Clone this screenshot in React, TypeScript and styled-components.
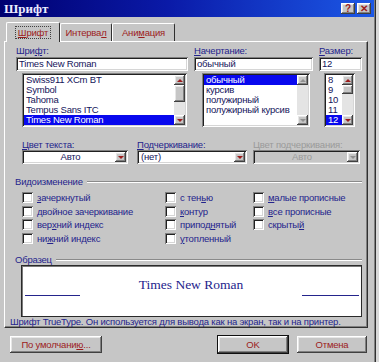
import * as React from 'react';
import styled, { createGlobalStyle, css } from 'styled-components';

const ui = '"Liberation Sans", Arial, sans-serif';
const face = '#c6c6c6';
const navy = '#24248c';
const ink = '#14145a';
const maroon = '#9c1c1c';

const raised = css`
  box-shadow: inset -1px -1px #404040, inset 1px 1px #ffffff, inset -2px -2px #808080,
    inset 2px 2px #e6e6e6;
`;

const sunken = css`
  box-shadow: inset 1px 1px #808080, inset -1px -1px #ffffff, inset 2px 2px #202020,
    inset -2px -2px #d6d6d6;
`;

const GlobalStyle = createGlobalStyle`
  body {
    margin: 0;
    background: #d8d8d8;
    font-family: ${ui};
  }
`;

const Window = styled.div`
  width: 376px;
  height: 362px;
  background: ${face};
  box-shadow: inset -1px 0 #303030, inset -2px 0 #808080;
  display: flex;
  flex-direction: column;
  font-family: ${ui};
  font-size: 9.5px;
  letter-spacing: -0.2px;
`;

const TitleBar = styled.div`
  height: 17px;
  margin-right: 2px;
  display: flex;
  align-items: center;
  padding: 0 3px 0 4px;
  background: linear-gradient(to right, #000070 0%, #0a1aa8 45%, #1c58e6 100%);
`;

const TitleText = styled.span`
  font: bold 13px 'Liberation Serif', serif;
  letter-spacing: 0;
  color: #ecebff;
`;

const TitleButtons = styled.div`
  margin-left: auto;
  display: flex;
  gap: 2px;
`;

const TitleButton = styled.div`
  width: 14px;
  height: 11px;
  background: ${face};
  ${raised};
  color: ${maroon};
  font: bold 10px 'Liberation Sans', sans-serif;
  display: flex;
  align-items: center;
  justify-content: center;
  line-height: 1;
`;

const TabStrip = styled.div`
  height: 24px;
  display: flex;
  align-items: flex-end;
  padding-left: 6px;
`;

const Tab = styled.div<{ $active?: boolean; $w: number }>`
  position: relative;
  z-index: ${({ $active }) => ($active ? 1 : 0)};
  width: ${({ $w }) => $w}px;
  height: ${({ $active }) => ($active ? 20 : 18)}px;
  margin-bottom: ${({ $active }) => ($active ? -1 : 0)}px;
  box-sizing: border-box;
  border: 1px solid;
  border-color: #ffffff #303030 transparent #ffffff;
  border-bottom: none;
  border-radius: 2px 2px 0 0;
  background: ${face};
  color: ${maroon};
  display: flex;
  align-items: center;
  justify-content: center;
`;

const FocusRect = styled.span`
  outline: 1px dotted #404040;
  padding: 0 2px;
  line-height: 11px;
`;

const Key = styled.span`
  text-decoration: underline;
`;

const Panel = styled.div`
  margin: 0 8px 0 4px;
  box-sizing: border-box;
  border: 1px solid;
  border-color: #ffffff #303030 #303030 #ffffff;
  box-shadow: inset -1px -1px #808080;
  padding: 3px 5px 0 11px;
  display: flex;
  flex-direction: column;
`;

const TopRow = styled.div`
  display: flex;
  gap: 6px;
`;

const Column = styled.div<{ $w: number }>`
  width: ${({ $w }) => $w}px;
  display: flex;
  flex-direction: column;
`;

const Label = styled.div<{ $disabled?: boolean; $h?: number }>`
  height: ${({ $h }) => $h ?? 12}px;
  line-height: ${({ $h }) => $h ?? 12}px;
  color: ${({ $disabled }) => ($disabled ? '#9a9a9a' : navy)};
  white-space: nowrap;
`;

const TextBox = styled.div`
  height: 14px;
  line-height: 14px;
  padding-left: 3px;
  background: #ffffff;
  ${sunken};
  color: ${ink};
`;

const ListBox = styled.div<{ $left: number; $w: number }>`
  margin: 2px 0 0 ${({ $left }) => $left}px;
  width: ${({ $w }) => $w}px;
  height: 54px;
  box-sizing: border-box;
  padding: 2px;
  background: #ffffff;
  ${sunken};
  display: flex;
`;

const Items = styled.div`
  flex: 1;
  display: flex;
  flex-direction: column;
  overflow: hidden;
`;

const Item = styled.div<{ $selected?: boolean }>`
  height: 10px;
  line-height: 10px;
  padding-left: 2px;
  white-space: nowrap;
  color: ${({ $selected }) => ($selected ? '#ffffff' : ink)};
  background: ${({ $selected }) => ($selected ? '#0808ee' : 'transparent')};
`;

const ScrollBar = styled.div`
  width: 11px;
  display: flex;
  flex-direction: column;
  background: #e4e4e4;
`;

const ScrollTrack = styled.div`
  flex: 1;
  display: flex;
  flex-direction: column;
`;

const ArrowBox = styled.div`
  height: 10px;
  background: ${face};
  ${raised};
  display: flex;
  align-items: center;
  justify-content: center;
`;

const Triangle = styled.span<{ $down?: boolean; $disabled?: boolean }>`
  width: 0;
  height: 0;
  border-left: 3px solid transparent;
  border-right: 3px solid transparent;
  ${({ $down, $disabled }) =>
    $down
      ? `border-top: 3px solid ${$disabled ? '#909090' : maroon};`
      : `border-bottom: 3px solid ${$disabled ? '#909090' : maroon};`}
`;

const Thumb = styled.div<{ $top: number; $h: number }>`
  margin-top: ${({ $top }) => $top}px;
  height: ${({ $h }) => $h}px;
  background: ${face};
  ${raised};
`;

const ComboRow = styled.div`
  display: flex;
  margin: 13px 0 0 6px;
  gap: 9px;
`;

const ComboField = styled.div<{ $w: number; $gap?: number }>`
  width: ${({ $w }) => $w}px;
  margin-left: ${({ $gap }) => $gap ?? 0}px;
  display: flex;
  flex-direction: column;
`;

const Combo = styled.div<{ $disabled?: boolean }>`
  height: 14px;
  box-sizing: border-box;
  padding: 2px;
  display: flex;
  background: ${({ $disabled }) => ($disabled ? face : '#ffffff')};
  ${sunken};
`;

const ComboValue = styled.div<{ $center?: boolean; $disabled?: boolean }>`
  flex: 1;
  line-height: 10px;
  padding-left: 2px;
  text-align: ${({ $center }) => ($center ? 'center' : 'left')};
  color: ${({ $disabled }) => ($disabled ? '#9a9a9a' : ink)};
`;

const DropButton = styled.div`
  width: 11px;
  background: ${face};
  ${raised};
  display: flex;
  align-items: center;
  justify-content: center;
`;

const GroupHeader = styled.div<{ $top: number }>`
  margin: ${({ $top }) => $top}px 0 0 -1px;
  height: 10px;
  display: flex;
  align-items: center;
  color: ${navy};
  line-height: 10px;
`;

const EtchedLine = styled.div`
  flex: 1;
  margin-left: 4px;
  border-top: 1px solid #8a8a8a;
  border-bottom: 1px solid #ffffff;
`;

const CheckGrid = styled.div`
  margin: 4px 0 0 6px;
  display: grid;
  grid-template-columns: 143px 88px 1fr;
  grid-template-rows: repeat(4, 13.5px);
  grid-auto-flow: column;
`;

const CheckItem = styled.div`
  display: flex;
  align-items: center;
  color: ${navy};
  white-space: nowrap;
`;

const CheckBox = styled.span`
  width: 11px;
  height: 11px;
  margin-right: 4px;
  background: #ffffff;
  ${sunken};
`;

const Preview = styled.div`
  margin: 0 0 0 5px;
  width: 341px;
  height: 52px;
  box-sizing: border-box;
  border: 1px solid #2a2a2a;
  box-shadow: inset 1px 1px #7a7a7a;
  background: #ffffff;
  display: flex;
  align-items: flex-start;
  padding: 12px 2px 0 3px;
`;

const BaseLine = styled.div<{ $w: number }>`
  width: ${({ $w }) => $w}px;
  margin-top: 17px;
  border-top: 1px solid ${navy};
`;

const SampleText = styled.div`
  flex: 1;
  text-align: center;
  font: 13.5px/14px 'Liberation Serif', serif;
  letter-spacing: 0;
  color: ${navy};
`;

const InfoText = styled.div`
  margin-left: -6px;
  height: 10px;
  line-height: 10px;
  color: ${navy};
  white-space: nowrap;
`;

const ButtonRow = styled.div`
  display: flex;
  margin-top: 8px;
  padding-left: 10px;
`;

const Button = styled.div<{ $w: number; $gap?: number; $default?: boolean }>`
  width: ${({ $w }) => $w}px;
  height: 17px;
  margin-left: ${({ $gap }) => $gap ?? 0}px;
  box-sizing: border-box;
  background: ${face};
  ${raised};
  ${({ $default }) => ($default ? 'outline: 1px solid #101010;' : '')}
  color: ${maroon};
  display: flex;
  align-items: center;
  justify-content: center;
`;

const fonts = ['Swiss911 XCm BT', 'Symbol', 'Tahoma', 'Tempus Sans ITC', 'Times New Roman'];
const styles = ['обычный', 'курсив', 'полужирный', 'полужирный курсив'];
const sizes = ['8', '9', '10', '11', '12'];

const Scroll = ({ thumb, disabled }: { thumb?: [number, number]; disabled?: boolean }) => (
  <ScrollBar>
    <ArrowBox>
      <Triangle $disabled={disabled} />
    </ArrowBox>
    <ScrollTrack>{thumb && <Thumb $top={thumb[0]} $h={thumb[1]} />}</ScrollTrack>
    <ArrowBox>
      <Triangle $down $disabled={disabled} />
    </ArrowBox>
  </ScrollBar>
);

const Check = ({ children }: { children: React.ReactNode }) => (
  <CheckItem>
    <CheckBox />
    {children}
  </CheckItem>
);

const App = () => (
  <Window>
    <GlobalStyle />
    <TitleBar>
      <TitleText>Шрифт</TitleText>
      <TitleButtons>
        <TitleButton>?</TitleButton>
        <TitleButton>✕</TitleButton>
      </TitleButtons>
    </TitleBar>

    <TabStrip>
      <Tab $active $w={54}>
        <FocusRect>
          <Key>Ш</Key>рифт
        </FocusRect>
      </Tab>
      <Tab $w={52}>
        Интерва<Key>л</Key>
      </Tab>
      <Tab $w={63}>
        Ани<Key>м</Key>ация
      </Tab>
    </TabStrip>

    <Panel>
      <TopRow>
        <Column $w={172}>
          <Label>
            Шри<Key>ф</Key>т:
          </Label>
          <TextBox>Times New Roman</TextBox>
          <ListBox $left={6} $w={165}>
            <Items>
              {fonts.map((f) => (
                <Item key={f} $selected={f === 'Times New Roman'}>
                  {f}
                </Item>
              ))}
            </Items>
            <Scroll thumb={[0, 17]} />
          </ListBox>
        </Column>
        <Column $w={119}>
          <Label>
            <Key>Н</Key>ачертание:
          </Label>
          <TextBox>обычный</TextBox>
          <ListBox $left={8} $w={108}>
            <Items>
              {styles.map((s) => (
                <Item key={s} $selected={s === 'обычный'}>
                  {s}
                </Item>
              ))}
            </Items>
            <Scroll disabled />
          </ListBox>
        </Column>
        <Column $w={43}>
          <Label>
            <Key>Р</Key>азмер:
          </Label>
          <TextBox>12</TextBox>
          <ListBox $left={5} $w={31}>
            <Items>
              {sizes.map((s) => (
                <Item key={s} $selected={s === '12'}>
                  {s}
                </Item>
              ))}
            </Items>
            <Scroll thumb={[0, 9]} />
          </ListBox>
        </Column>
      </TopRow>

      <ComboRow>
        <ComboField $w={106}>
          <Label $h={10}>
            <Key>Ц</Key>вет текста:
          </Label>
          <Combo>
            <ComboValue $center>Авто</ComboValue>
            <DropButton>
              <Triangle $down />
            </DropButton>
          </Combo>
        </ComboField>
        <ComboField $w={110}>
          <Label $h={10}>
            <Key>П</Key>одчеркивание:
          </Label>
          <Combo>
            <ComboValue>(нет)</ComboValue>
            <DropButton>
              <Triangle $down />
            </DropButton>
          </Combo>
        </ComboField>
        <ComboField $w={107} $gap={-3}>
          <Label $h={10} $disabled>
            Цвет подчеркивания:
          </Label>
          <Combo $disabled>
            <ComboValue $center $disabled>
              Авто
            </ComboValue>
            <DropButton>
              <Triangle $down $disabled />
            </DropButton>
          </Combo>
        </ComboField>
      </ComboRow>

      <GroupHeader $top={13}>
        Видоизменение
        <EtchedLine />
      </GroupHeader>
      <CheckGrid>
        <Check>
          <Key>з</Key>ачеркнутый
        </Check>
        <Check>
          <Key>д</Key>войное зачеркивание
        </Check>
        <Check>
          вер<Key>х</Key>ний индекс
        </Check>
        <Check>
          ни<Key>ж</Key>ний индекс
        </Check>
        <Check>
          с тен<Key>ь</Key>ю
        </Check>
        <Check>
          <Key>к</Key>онтур
        </Check>
        <Check>
          припод<Key>н</Key>ятый
        </Check>
        <Check>
          <Key>у</Key>топленный
        </Check>
        <Check>
          <Key>м</Key>алые прописные
        </Check>
        <Check>
          <Key>в</Key>се прописные
        </Check>
        <Check>
          скрыты<Key>й</Key>
        </Check>
      </CheckGrid>

      <GroupHeader $top={10}>
        Образец
        <EtchedLine />
      </GroupHeader>
      <Preview>
        <BaseLine $w={55} />
        <SampleText>Times New Roman</SampleText>
        <BaseLine $w={57} />
      </Preview>
      <InfoText>Шрифт TrueType. Он используется для вывода как на экран, так и на принтер.</InfoText>
    </Panel>

    <ButtonRow>
      <Button $w={92}>
        По умолчани<Key>ю</Key>...
      </Button>
      <Button $w={70} $gap={116} $default>
        OK
      </Button>
      <Button $w={70} $gap={9}>
        Отмена
      </Button>
    </ButtonRow>
  </Window>
);

export default App;
